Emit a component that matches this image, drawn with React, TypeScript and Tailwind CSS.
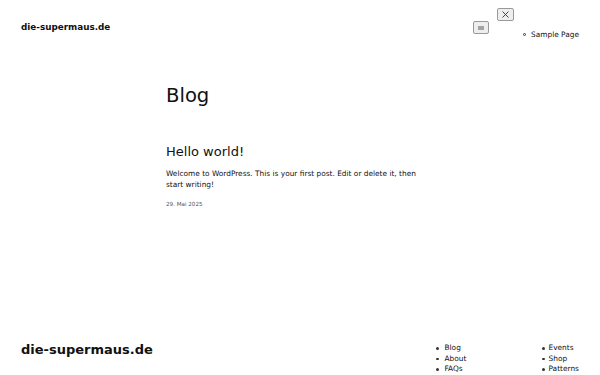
import React from "react";

export default function App() {
  const font = { fontFamily: '"DejaVu Sans", sans-serif' };
  return (
    <div className="w-[600px] h-[375px] bg-white text-[#111] relative overflow-hidden" style={font}>
      <header className="h-[60px] flex items-start justify-between pl-[21px] pr-[21px]">
        <div className="mt-[22px] text-[8.8px] font-bold leading-[10px] text-[#111]">die-supermaus.de</div>
        <div className="flex items-start">
          <button className="mt-[21px] w-[16px] h-[13px] border border-[#999] bg-[#eee] rounded-[2px] flex items-center justify-center">
            <svg width="8" height="6" viewBox="0 0 8 6"><path d="M1 2h6M1 4h6" stroke="#333" strokeWidth="0.8" /></svg>
          </button>
          <div className="ml-[8px] mt-[8px] flex flex-col">
            <button className="w-[17px] h-[13px] border border-[#999] bg-[#eee] rounded-[2px] flex items-center justify-center">
              <svg width="9" height="9" viewBox="0 0 9 9"><path d="M1.5 1.5l6 6M7.5 1.5l-6 6" stroke="#333" strokeWidth="0.9" /></svg>
            </button>
            <ul className="ml-[26px] mt-[9px] text-[7.4px] leading-[9px]">
              <li className="flex items-center whitespace-nowrap">
                <span className="w-[3px] h-[3px] border border-[#333] rounded-full mr-[5px]" />
                Sample Page
              </li>
            </ul>
          </div>
        </div>
      </header>
      <main className="ml-[166px] mt-[24px]">
        <h1 className="text-[19.6px] leading-[24px] text-[#111]">Blog</h1>
        <h2 className="mt-[36px] text-[13px] leading-[16px] text-[#111]">Hello world!</h2>
        <p className="mt-[8px] text-[7.4px] leading-[11px] w-[258px] text-[#111]">
          Welcome to WordPress. This is your first post. Edit or delete it, then start writing!
        </p>
        <div className="mt-[11px] text-[5.6px] leading-[7px] text-[#555]">29. Mai 2025</div>
      </main>
      <footer className="absolute left-0 right-0 top-[342px] flex pl-[21px]">
        <div className="w-[409px] text-[13px] font-bold leading-[16px] text-[#111]">die-supermaus.de</div>
        <ul className="w-[112px] mt-[1px] text-[7.4px] leading-[10.5px]">
          <li className="flex items-center"><span className="w-[2.5px] h-[2.5px] bg-[#333] rounded-full ml-[6px] mr-[6px]" />Blog</li>
          <li className="flex items-center"><span className="w-[2.5px] h-[2.5px] bg-[#333] rounded-full ml-[6px] mr-[6px]" />About</li>
          <li className="flex items-center"><span className="w-[2.5px] h-[2.5px] bg-[#333] rounded-full ml-[6px] mr-[6px]" />FAQs</li>
        </ul>
        <ul className="mt-[1px] text-[7.4px] leading-[10.5px]">
          <li className="flex items-center"><span className="w-[2.5px] h-[2.5px] bg-[#333] rounded-full mr-[4px]" />Events</li>
          <li className="flex items-center"><span className="w-[2.5px] h-[2.5px] bg-[#333] rounded-full mr-[4px]" />Shop</li>
          <li className="flex items-center"><span className="w-[2.5px] h-[2.5px] bg-[#333] rounded-full mr-[4px]" />Patterns</li>
        </ul>
      </footer>
    </div>
  );
}
